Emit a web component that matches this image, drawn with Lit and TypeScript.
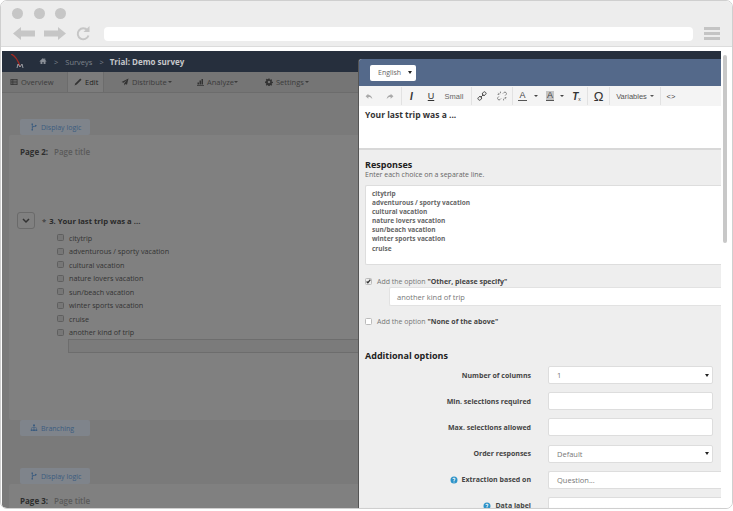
import { LitElement, html, css, svg } from 'lit';
import { customElement } from 'lit/decorators.js';

const CHOICES = [
  'citytrip',
  'adventurous / sporty vacation',
  'cultural vacation',
  'nature lovers vacation',
  'sun/beach vacation',
  'winter sports vacation',
  'cruise',
];

const icon = (w: number, h: number, body: unknown, cls = '') =>
  html`<svg class=${cls} width=${w} height=${h} viewBox="0 0 16 16" fill="currentColor">${body}</svg>`;

const icons = {
  home: svg`<path d="M8 2 1 8.500l1 1 1-.9V14h3.800v-4h2.400v4H13V8.600l1 .9 1-1-2.500-2.300V3h-2v2.300z"/>`,
  list: svg`<path d="M1 2h14v12H1zm1.500 1.500v2h2.500v-2zm4 0v2h7v-2zm-4 3.500v2h2.500V7zm4 0v2h7V7zm-4 3.500v2h2.500v-2zm4 0v2h7v-2z" fill-rule="evenodd"/>`,
  pencil: svg`<path d="M12.500 1 15 3.500 5.500 13 1 15l2-4.500z"/>`,
  plane: svg`<path d="M15 1 1 8l4 1.500L12 4 6.500 10.500V15l2.500-3 3 1.500z"/>`,
  chart: svg`<path d="M1 14h14v1.500H1zM2 9h3v4H2zM6 5h3v8H6zM10 2h3v11h-3z"/>`,
  cog: svg`<path fill-rule="evenodd" d="M6.800 1h2.400l.4 2 1.400.6 1.700-1.100 1.700 1.700-1.100 1.700.6 1.400 2 .4v2.400l-2 .4-.6 1.400 1.100 1.700-1.700 1.700-1.700-1.100-1.400.6-.4 2H6.800l-.4-2-1.400-.6-1.700 1.100-1.700-1.700 1.100-1.700-.6-1.400-2-.4V6.800l2-.4.6-1.400-1.100-1.700 1.700-1.700L5 2.700l1.400-.6zM8 5.500a2.500 2.500 0 1 0 0 5 2.500 2.500 0 0 0 0-5z"/>`,
  logic: svg`<path d="M3 1h3v3H5.300v3.500C6.500 6.200 8 6.200 9.500 6l.8-2.500L14 5l-3 3-.8-.8c-2 .5-4.400.6-4.900 2.800V12H6v3H3v-3h.7V4H3z"/>`,
  branch: svg`<path d="M6 1h4v3H8.700v3H13v4h1.500v3h-4v-3H12V8.200H8.700V11H10v3H6v-3h1.300V8.200H4V11h1.500v3h-4v-3H3V7h4.300V4H6z"/>`,
  undo: svg`<path d="M6 3 1 7.500 6 12V9c3.500 0 5.500 1 7 4-.3-4.500-3-7.500-7-7.500z"/>`,
  redo: svg`<path d="M10 3l5 4.500L10 12V9c-3.500 0-5.500 1-7 4 .3-4.500 3-7.500 7-7.500z"/>`,
  link: svg`<g fill="none" stroke="currentColor" stroke-width="1.500"><rect x="8.500" y="1.800" width="6" height="5" rx="2.300" transform="rotate(-45 11.500 4.300)"/><rect x="1.500" y="9.200" width="6" height="5" rx="2.300" transform="rotate(-45 4.500 11.700)"/><path d="m6 10 4-4"/></g>`,
  unlink: svg`<g fill="none" stroke="currentColor" stroke-width="1.400"><path d="M9.500 4 11 2.500a2.400 2.400 0 0 1 3.400 3.400L13 7.300M6.500 12 5 13.500a2.400 2.400 0 0 1-3.400-3.400L3 8.700M2 3l2 2M5.500 1v2.500M1 5.500h2.500M14 13l-2-2M10.500 15v-2.500M15 10.500h-2.500"/></g>`,
  info: svg`<path fill-rule="evenodd" d="M8 1a7 7 0 1 0 0 14A7 7 0 0 0 8 1zM7 11h2v2H7zm-2-5c0-3.500 6-3.500 6 0 0 2-2 2-2 4H7c0-2.500 2-2.500 2-4 0-1-2-1-2 0z"/>`,
};

@customElement('app-root')
export class AppRoot extends LitElement {
  static styles = css`
    :host {
      display: block;
      width: 733px;
      height: 511px;
      background: #fff;
      overflow: hidden;
      font-family: 'Open Sans', 'Liberation Sans', sans-serif;
    }
    .window {
      height: 509px;
      box-sizing: border-box;
      border: 1px solid #cfcfcf;
      border-radius: 7px;
      overflow: hidden;
      display: flex;
      flex-direction: column;
    }

    /* browser chrome */
    .chrome {
      height: 46px;
      flex: none;
      box-sizing: border-box;
      background: #ededed;
      border-bottom: 1px solid #dcdcdc;
      padding: 7px 12px 0 11px;
    }
    .dots {
      display: flex;
      gap: 10.500px;
    }
    .dots span {
      width: 11px;
      height: 11px;
      border-radius: 50%;
      background: #c6c6c6;
    }
    .addr {
      display: flex;
      align-items: center;
      margin-top: 7px;
      color: #c6c6c6;
    }
    .addr .nav {
      display: block;
      margin-right: 7px;
    }
    .addr .nav:first-child {
      margin-left: 1px;
    }
    .addr .reload {
      margin-left: 3px;
    }
    .url {
      width: 590px;
      height: 14px;
      margin-left: 12px;
      border-radius: 4px;
      background: #fff;
    }
    .burger {
      display: flex;
      flex-direction: column;
      gap: 2px;
      margin-left: 11px;
    }
    .burger span {
      width: 16px;
      height: 3px;
      background: #c4c4c4;
    }

    /* page behind the dialog */
    .app {
      position: relative;
      flex: 1;
      margin: 4px 0 0 1px;
      overflow: hidden;
      background: #fff;
    }
    .page {
      width: 719px;
      height: 100%;
      background: #7a7a7a;
      color: #333;
    }
    .topbar {
      height: 21px;
      background: #262f3d;
      display: flex;
      align-items: center;
      padding-left: 9px;
      font-size: 7.500px;
      color: #7d838c;
    }
    .topbar .logo {
      margin-right: 12px;
    }
    .topbar .crumb {
      margin-left: 7px;
    }
    .topbar .home {
      color: #8a8f97;
    }
    .topbar b {
      margin-left: 6px;
      font-size: 8px;
      color: #c6c8cb;
    }
    .tabs {
      height: 20px;
      background: #757575;
      display: flex;
      align-items: stretch;
      font-size: 7.500px;
      color: #3b3b3b;
      border-bottom: 1px solid #6c6c6c;
    }
    .tab {
      display: flex;
      align-items: center;
      gap: 3px;
    }
    .tab svg {
      color: #333;
    }
    .tab .caret {
      margin-left: -2px;
    }
    .tab.overview {
      margin-left: 8px;
      width: 57px;
    }
    .tab.edit {
      width: 37px;
      box-sizing: border-box;
      padding-left: 6px;
      background: #7c7c7c;
      border-left: 1px solid #6c6c6c;
      border-right: 1px solid #6c6c6c;
      color: #222;
    }
    .tab.distribute {
      margin-left: 17px;
      width: 75px;
    }
    .tab.analyze {
      width: 69px;
      gap: 2px;
    }
    .caret {
      display: inline-block;
      width: 0;
      height: 0;
      margin-left: 2px;
      border-left: 2px solid transparent;
      border-right: 2px solid transparent;
      border-top: 2px solid currentColor;
    }
    .canvas {
      padding: 0 0 0 7px;
    }
    .flag {
      width: 70px;
      height: 16px;
      margin-left: 11px;
      box-sizing: border-box;
      padding-left: 10px;
      display: flex;
      align-items: center;
      gap: 3px;
      font-size: 7px;
      color: #3c5c7f;
      background: #7f848b;
      border-radius: 2px;
    }
    .flag.top {
      margin-top: 26px;
    }
    .flag.gap {
      margin-top: 32px;
    }
    .card {
      background: #808080;
      width: 360px;
      box-sizing: border-box;
      padding: 11px 11px 0;
      border-radius: 2px;
    }
    .card.first {
      height: 285px;
    }
    .card.second {
      height: 40px;
    }
    .pagehead {
      font-size: 8px;
      font-weight: 700;
      color: #2e2e2e;
      display: flex;
      gap: 6px;
    }
    .pagehead span {
      color: #5a5a5a;
      font-weight: 600;
    }
    .question {
      display: flex;
      align-items: center;
      margin: 55px 0 0 -3px;
      font-size: 7.700px;
      font-weight: 700;
      color: #2a2a2a;
    }
    .toggle {
      width: 18px;
      height: 17px;
      box-sizing: border-box;
      display: flex;
      align-items: center;
      justify-content: center;
      border: 1px solid #6a6a6a;
      border-radius: 3px;
      margin-right: 7px;
    }
    .star {
      color: #444;
      margin-right: 1px;
    }
    .opts {
      margin: 2px 0 0 37px;
    }
    .opt {
      height: 13.500px;
      display: flex;
      align-items: center;
      gap: 5px;
      font-size: 7.200px;
      color: #333;
    }
    .box {
      width: 7px;
      height: 7px;
      flex: none;
      box-sizing: border-box;
      background: #777;
      border: 1px solid #5f5f5f;
      border-radius: 1.500px;
    }
    .otherfield {
      height: 14px;
      margin: 0 -11px 0 11px;
      box-sizing: border-box;
      background: #7b7b7b;
      border: 1px solid #6d6d6d;
    }

    /* scrollbar of the page */
    .pagebar {
      position: absolute;
      top: 4px;
      left: 721px;
      width: 4px;
      height: 188px;
      background: #c8c8c8;
      border-radius: 2px;
    }

    /* dialog */
    .dialog {
      position: absolute;
      top: 8px;
      left: 357px;
      width: 362px;
      bottom: 0;
      overflow: hidden;
      border-radius: 3px 0 0 0;
      box-shadow: -1px 0 0 #555;
      display: flex;
      flex-direction: column;
      background: #eee;
    }
    .dhead {
      height: 27px;
      flex: none;
      background: #54698a;
      display: flex;
      align-items: center;
      padding-left: 11px;
    }
    .lang {
      width: 46px;
      height: 16px;
      box-sizing: border-box;
      padding: 0 4px 0 8px;
      border-radius: 2px;
      background: #fff;
      display: flex;
      align-items: center;
      justify-content: space-between;
      font-size: 7px;
      color: #666;
    }
    .lang .caret,
    .select .caret {
      color: #222;
      border-top-width: 3px;
    }
    .tools {
      height: 20px;
      flex: none;
      display: flex;
      background: #f4f4f4;
      color: #444;
      font-family: 'Liberation Sans', sans-serif;
      font-size: 7.500px;
    }
    .group {
      display: flex;
      align-items: center;
      box-sizing: border-box;
      border-right: 1px solid #e2e2e2;
      height: 18px;
      margin-top: 1px;
    }
    .tool {
      display: flex;
      align-items: center;
      justify-content: center;
      height: 100%;
    }
    .tool.muted {
      color: #aaa;
    }
    .tool i {
      font-size: 10px;
      font-weight: 700;
      color: #333;
    }
    .tool u {
      font-size: 9px;
      font-weight: 400;
      color: #333;
    }
    .fa {
      font-size: 9px;
      color: #444;
      border-bottom: 1px solid #555;
      line-height: 9px;
      padding: 0 1px;
    }
    .fa.bg {
      background: #c4c4c4;
    }
    .omega {
      font-size: 13px;
      color: #333;
    }
    .editor {
      height: 44px;
      flex: none;
      box-sizing: border-box;
      padding: 3px 6px;
      background: #fff;
      border-bottom: 2px solid #d8d8d8;
      font-size: 8.500px;
      font-weight: 700;
      color: #333;
    }
    .body {
      flex: 1;
      padding: 9px 0 0 6px;
      position: relative;
    }
    h3 {
      margin: 0;
      font-size: 9px;
      line-height: 11px;
      font-weight: 700;
      color: #222;
    }
    .hint {
      font-size: 7px;
      line-height: 10px;
      color: #666;
    }
    .choices {
      height: 80px;
      box-sizing: border-box;
      margin-top: 5px;
      padding: 3px 6px;
      background: #fff;
      border: 1px solid #ddd;
      border-right: none;
      border-radius: 2px 0 0 2px;
      font-size: 6.500px;
      line-height: 9.100px;
      font-weight: 700;
      color: #666;
    }
    .check {
      display: flex;
      align-items: center;
      gap: 5px;
      height: 10px;
      font-size: 7px;
      color: #777;
    }
    .check b {
      color: #444;
    }
    .check.other {
      margin-top: 11px;
    }
    .check.none {
      margin-top: 10px;
    }
    .dbox {
      width: 7px;
      height: 7px;
      flex: none;
      box-sizing: border-box;
      background: #fff;
      border: 1px solid #bbb;
      border-radius: 1.500px;
    }
    .dbox svg {
      display: block;
    }
    .dbox.on {
      background: #eee;
    }
    .otherinput {
      height: 19px;
      margin: 1px 0 0 24px;
      box-sizing: border-box;
      padding-left: 7px;
      display: flex;
      align-items: center;
      background: #fff;
      border: 1px solid #e2e2e2;
      border-right: none;
      border-radius: 2px 0 0 2px;
      font-size: 7.500px;
      color: #777;
    }
    h3.more {
      margin-top: 24px;
    }
    .grid {
      display: grid;
      grid-template-columns: 166px 165px;
      grid-auto-rows: 18px;
      row-gap: 8.200px;
      column-gap: 17px;
      margin-top: 5px;
    }
    .lbl {
      display: flex;
      align-items: center;
      justify-content: flex-end;
      gap: 4px;
      font-size: 7px;
      font-weight: 700;
      color: #444;
    }
    .lbl svg {
      color: #2b93c9;
    }
    .select {
      box-sizing: border-box;
      padding: 0 3px 0 8px;
      background: #fff;
      border: 1px solid #ddd;
      border-radius: 2px;
      display: flex;
      align-items: center;
      justify-content: space-between;
      font-size: 7.500px;
      color: #777;
    }
    .select.wide {
      width: 185px;
      border-right: none;
    }
    .fade {
      position: absolute;
      left: 0;
      right: 0;
      bottom: 0;
      height: 8px;
      background: linear-gradient(rgba(200, 200, 200, 0), rgba(200, 200, 200, 0.7));
    }
  `;

  private renderChrome() {
    return html`
      <div class="chrome">
        <div class="dots"><span></span><span></span><span></span></div>
        <div class="addr">
          <svg class="nav" width="23" height="13" viewBox="0 0 23 13" fill="currentColor"><path d="M0 6.500 8 0v3.500h14v6H8V13z"/></svg>
          <svg class="nav" width="23" height="13" viewBox="0 0 23 13" fill="currentColor"><path d="M23 6.500 15 0v3.500H1v6h14V13z"/></svg>
          <svg class="reload" width="16" height="15" viewBox="0 0 16 15" fill="none" stroke="currentColor" stroke-width="2"><path d="M12.500 9.500a5.500 5.500 0 1 1-1-5.200"/><path d="M13.500 0v6h-6z" fill="currentColor" stroke="none"/></svg>
          <div class="url"></div>
          <div class="burger"><span></span><span></span><span></span></div>
        </div>
      </div>
    `;
  }

  private renderPage() {
    const others = [...CHOICES, 'another kind of trip'];
    return html`
      <div class="page">
        <div class="topbar">
          <svg class="logo" width="16" height="15" viewBox="0 0 16 15" fill="none">
            <path d="M0 0c3 1 6 4 9 12" stroke="#a02a24" stroke-width="1.300"/>
            <path d="M6 14l1-4 2 3 2-3 1 4" stroke="#9a9ea4" stroke-width="1"/>
          </svg>
          <span class="home">${icon(8, 8, icons.home)}</span>
          <span class="crumb">&gt;</span>
          <span class="crumb">Surveys</span>
          <span class="crumb">&gt;</span>
          <b>Trial: Demo survey</b>
        </div>
        <div class="tabs">
          <div class="tab overview">${icon(8, 8, icons.list)}Overview</div>
          <div class="tab edit">${icon(8, 8, icons.pencil)}Edit</div>
          <div class="tab distribute">${icon(8, 8, icons.plane)}Distribute<span class="caret"></span></div>
          <div class="tab analyze">${icon(9, 8, icons.chart)}Analyze<span class="caret"></span></div>
          <div class="tab">${icon(8, 8, icons.cog)}Settings<span class="caret"></span></div>
        </div>
        <div class="canvas">
          <div class="flag top">${icon(8, 8, icons.logic)}Display logic</div>
          <div class="card first">
            <div class="pagehead">Page 2: <span>Page title</span></div>
            <div class="question">
              <div class="toggle">
                <svg width="8" height="6" viewBox="0 0 8 6" fill="none" stroke="#333" stroke-width="1.500"><path d="m1 1 3 3 3-3"/></svg>
              </div>
              <span class="star">*</span>&nbsp;3.&nbsp;Your last trip was a ...
            </div>
            <div class="opts">
              ${others.map((o) => html`<div class="opt"><span class="box"></span>${o}</div>`)}
              <div class="otherfield"></div>
            </div>
          </div>
          <div class="flag">${icon(8, 8, icons.branch)}Branching</div>
          <div class="flag gap">${icon(8, 8, icons.logic)}Display logic</div>
          <div class="card second">
            <div class="pagehead">Page 3: <span>Page title</span></div>
          </div>
        </div>
      </div>
    `;
  }

  private renderTools() {
    return html`
      <div class="tools">
        <div class="group" style="width:43px">
          <span class="tool muted" style="width:20px">${icon(9, 9, icons.undo)}</span>
          <span class="tool muted" style="width:20px">${icon(9, 9, icons.redo)}</span>
        </div>
        <div class="group" style="width:70px">
          <span class="tool" style="width:19px"><i>I</i></span>
          <span class="tool" style="width:20px"><u>U</u></span>
          <span class="tool" style="width:26px;color:#666">Small</span>
        </div>
        <div class="group" style="width:41px">
          <span class="tool" style="width:20px">${icon(10, 10, icons.link)}</span>
          <span class="tool" style="width:20px;color:#777">${icon(10, 10, icons.unlink)}</span>
        </div>
        <div class="group" style="width:75px">
          <span class="tool" style="width:30px"><span class="fa">A</span><span class="caret" style="margin-left:7px"></span></span>
          <span class="tool" style="width:24px"><span class="fa bg">A</span><span class="caret" style="margin-left:6px"></span></span>
          <span class="tool" style="width:19px"><i>T</i><span style="font-size:5px;margin-top:6px">x</span></span>
        </div>
        <div class="group" style="width:22px">
          <span class="tool omega" style="width:22px">Ω</span>
        </div>
        <div class="group" style="width:51px;justify-content:center;color:#555">
          Variables<span class="caret" style="margin-left:3px"></span>
        </div>
        <div class="group" style="width:20px;justify-content:center;border:none">&lt;&gt;</div>
      </div>
    `;
  }

  private renderDialog() {
    return html`
      <div class="dialog">
        <div class="dhead">
          <div class="lang">English<span class="caret"></span></div>
        </div>
        ${this.renderTools()}
        <div class="editor">Your last trip was a ...</div>
        <div class="body">
          <h3>Responses</h3>
          <div class="hint">Enter each choice on a separate line.</div>
          <div class="choices">${CHOICES.map((c) => html`<div>${c}</div>`)}</div>
          <div class="check other">
            <span class="dbox on">
              <svg width="5" height="5" viewBox="0 0 8 8" fill="none" stroke="#333" stroke-width="2"><path d="m1 4 2 2 4-5"/></svg>
            </span>
            <span>Add the option <b>"Other, please specify"</b></span>
          </div>
          <div class="otherinput">another kind of trip</div>
          <div class="check none">
            <span class="dbox"></span>
            <span>Add the option <b>"None of the above"</b></span>
          </div>
          <h3 class="more">Additional options</h3>
          <div class="grid">
            <div class="lbl">Number of columns</div>
            <div class="select">1<span class="caret"></span></div>
            <div class="lbl">Min. selections required</div>
            <div class="select"></div>
            <div class="lbl">Max. selections allowed</div>
            <div class="select"></div>
            <div class="lbl">Order responses</div>
            <div class="select">Default<span class="caret"></span></div>
            <div class="lbl">${icon(8, 8, icons.info)}Extraction based on</div>
            <div class="select wide">Question...</div>
            <div class="lbl">${icon(8, 8, icons.info)}Data label</div>
            <div class="select wide"></div>
          </div>
          <div class="fade"></div>
        </div>
      </div>
    `;
  }

  render() {
    return html`
      <div class="window">
        ${this.renderChrome()}
        <div class="app">
          ${this.renderPage()}
          <div class="pagebar"></div>
          ${this.renderDialog()}
        </div>
      </div>
    `;
  }
}
